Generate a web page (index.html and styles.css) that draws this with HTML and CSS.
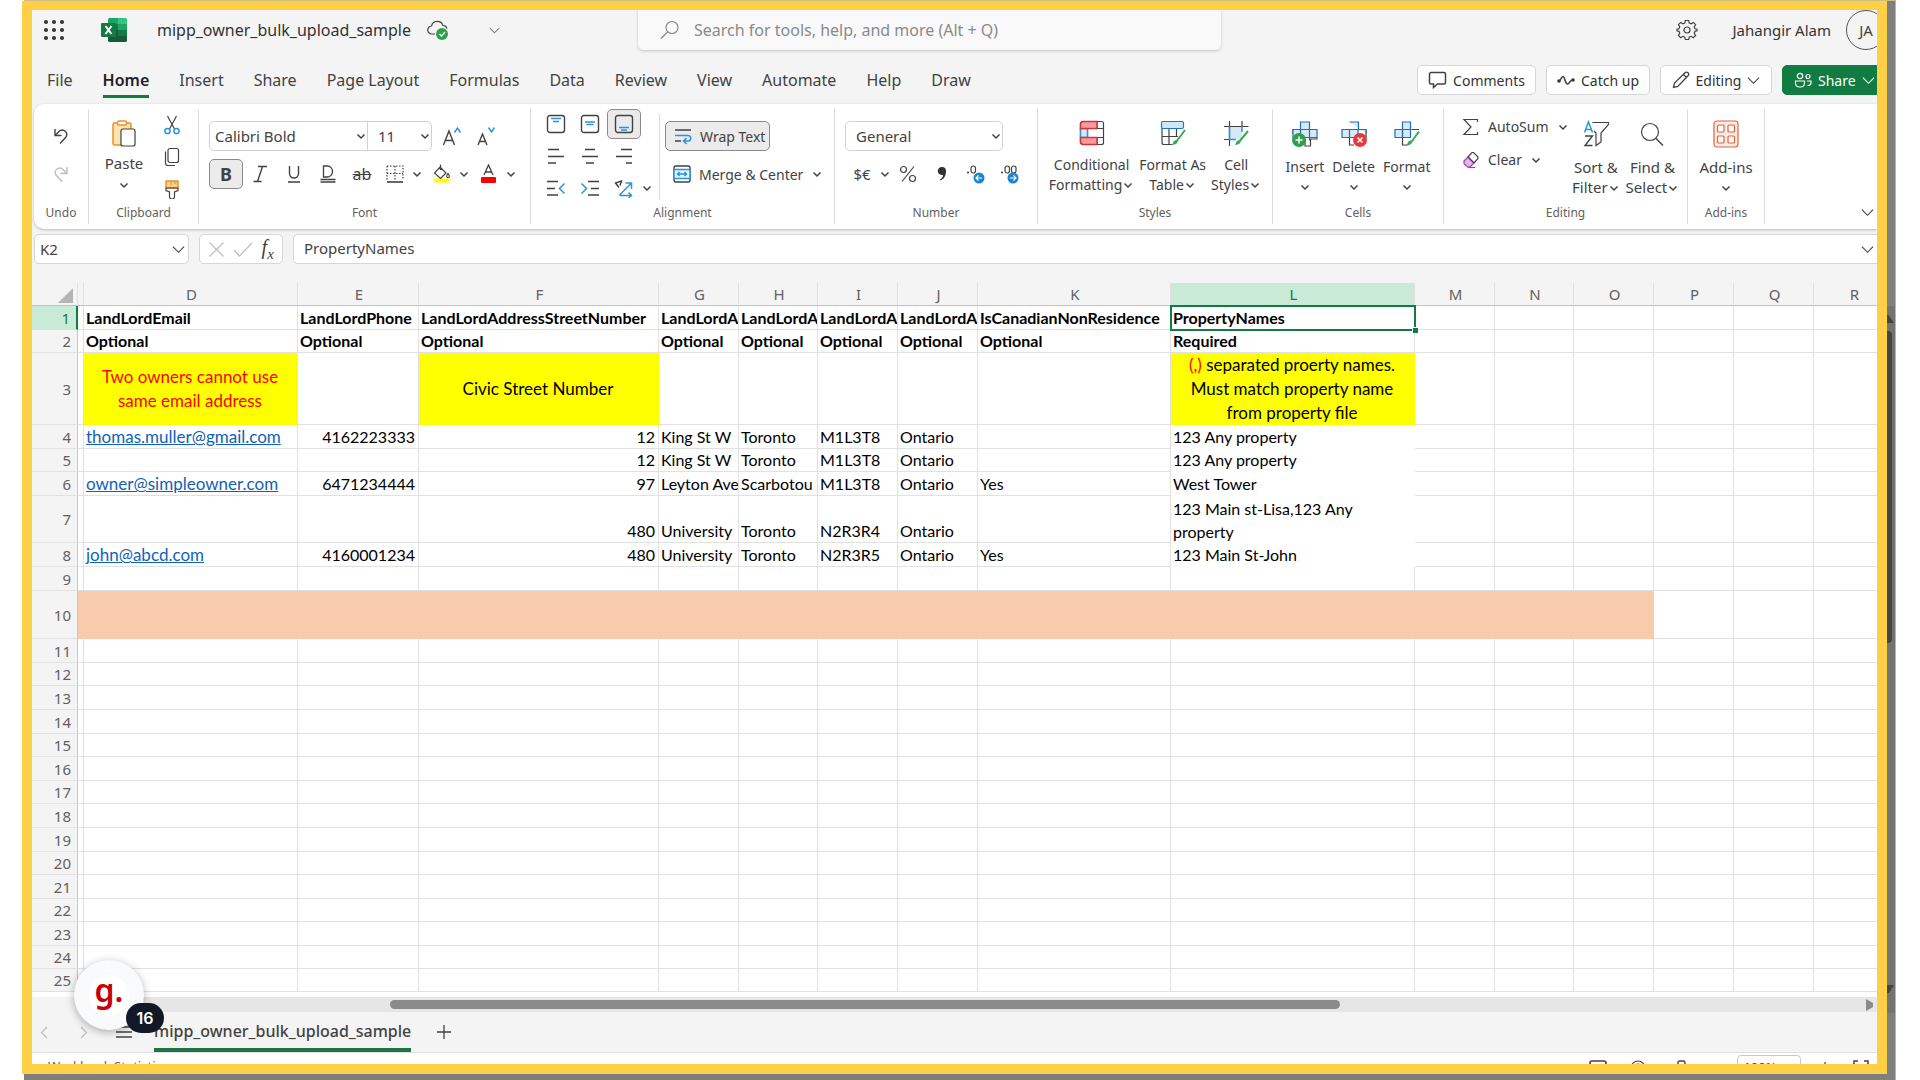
FILE: index.html
```html
<!DOCTYPE html>
<html lang="en">
<head>
  <meta charset="UTF-8" />
  <meta name="viewport" content="width=device-width, initial-scale=1.0"/>
  <title>mipp_owner_bulk_upload_sample</title>
  <link rel="stylesheet" href="styles.css">
</head>
<body>

<svg class="sprite" aria-hidden="true">
  <symbol id="chev" viewBox="0 0 12 12"><path d="M2.500 4.500 6 8l3.500-3.500" stroke-width="1.500"/></symbol>
  <symbol id="chev-lg" viewBox="0 0 14 14"><path d="M1 4l6 6 6-6"/></symbol>
</svg>

<div class="backdrop">
  <div class="app">

    <header class="topbar">
      <button class="launcher" aria-label="App launcher">
        <svg width="20" height="20" viewBox="0 0 20 20" class="solid"><circle cx="2" cy="2" r="2"/><circle cx="10" cy="2" r="2"/><circle cx="18" cy="2" r="2"/><circle cx="2" cy="10" r="2"/><circle cx="10" cy="10" r="2"/><circle cx="18" cy="10" r="2"/><circle cx="2" cy="18" r="2"/><circle cx="10" cy="18" r="2"/><circle cx="18" cy="18" r="2"/></svg>
      </button>
      <svg class="logo" width="26" height="24" viewBox="0 0 26 24">
        <path d="M8 0h9v6H7V1z" fill="#21a366"/><path d="M17 0h8l1 1v5h-9z" fill="#33c481"/>
        <path d="M7 6h10v6H7z" fill="#107c41"/><path d="M17 6h9v6h-9z" fill="#21a366"/>
        <path d="M7 12h10v12H8l-1-1z" fill="#185c37"/><path d="M17 12h9v6h-9z" fill="#107c41"/><path d="M17 18h9v5l-1 1h-8z" fill="#185c37"/>
        <rect y="5" width="15" height="14" rx="1" fill="#107c41"/>
        <path d="M4.500 8l6 8M10.500 8l-6 8" stroke="#fff" stroke-width="2"/>
      </svg>
      <span class="file-name">mipp_owner_bulk_upload_sample</span>
      <svg class="cloud" width="22" height="22" viewBox="0 0 22 22">
        <path d="M8 15H5a4 4 0 0 1-.5-8A6 6 0 0 1 16 6.500a4 4 0 0 1 4 3"/>
        <circle cx="15" cy="15" r="6" fill="#2fa14e" stroke="none"/><path d="M12.500 15l2 2 3.500-4" stroke="#fff"/>
      </svg>
      <button class="icon-btn" aria-label="File menu"><svg width="11" height="11"><use href="#chev-lg"/></svg></button>
      <label class="search">
        <svg width="20" height="20" viewBox="0 0 20 20"><circle cx="12" cy="7.500" r="6"/><path d="M7.500 12 1 18.500"/></svg>
        <input type="search" aria-label="Search" placeholder="Search for tools, help, and more (Alt + Q)">
      </label>
      <div class="account">
        <button class="icon-btn" aria-label="Settings">
          <svg width="22" height="22" viewBox="0 0 22 22"><path d="M9.300 1.500h3.400l.5 2.500 1.900.8 2.200-1.400 2.300 2.300-1.400 2.200.8 1.900 2 .4v1.600l-2 .5-.8 1.900 1.400 2.200-2.300 2.300-2.200-1.400-1.900.8-.5 2.400H9.300l-.5-2.400-1.900-.8-2.200 1.400-2.300-2.300 1.400-2.200-.8-1.900-2-.5v-1.600l2-.4.8-1.900-1.400-2.200 2.300-2.300 2.200 1.400 1.900-.8z"/><circle cx="11" cy="11" r="3"/></svg>
        </button>
        <span class="user">Jahangir Alam</span>
        <button class="avatar" aria-label="Account">JA</button>
      </div>
    </header>

    <nav class="tabs">
      <a href="#">File</a>
      <a href="#" class="active">Home</a>
      <a href="#">Insert</a>
      <a href="#">Share</a>
      <a href="#">Page Layout</a>
      <a href="#">Formulas</a>
      <a href="#">Data</a>
      <a href="#">Review</a>
      <a href="#">View</a>
      <a href="#">Automate</a>
      <a href="#">Help</a>
      <a href="#">Draw</a>
      <div class="tab-actions">
        <button class="comments"><svg width="19" height="18" viewBox="0 0 19 18"><path d="M3 1.500h13A1.500 1.500 0 0 1 17.500 3v8.500A1.500 1.500 0 0 1 16 13H9.500L5.500 16.500V13H3a1.500 1.500 0 0 1-1.500-1.500V3A1.500 1.500 0 0 1 3 1.500z" stroke-width="1.500"/></svg>Comments</button>
        <button class="catch-up"><svg width="18" height="14" viewBox="0 0 18 14"><circle cx="2" cy="8" r="1.800" class="solid"/><circle cx="16" cy="7" r="1.800" class="solid"/><path d="M2 8c2 0 2-4.500 4-4.500s2 7.500 4.500 7.500S12 7 16 7" stroke-width="1.600"/></svg>Catch up</button>
        <button class="editing-mode"><svg width="18" height="18" viewBox="0 0 18 18"><path d="M1.500 16.500l1-4.500L13 1.800a2 2 0 0 1 3 3L5.800 15.500zM11.500 3.500l3 3" stroke-width="1.300"/></svg>Editing<svg width="13" height="13"><use href="#chev-lg"/></svg></button>
        <button class="share"><svg width="18" height="16" viewBox="0 0 18 16"><circle cx="6" cy="4" r="2.700"/><circle cx="14" cy="4.500" r="2"/><path d="M1.500 9h9v2.500a4 4 0 0 1-4 3.500H5.500a4 4 0 0 1-4-3.500zM13 9h4v2c0 1.500-1.500 2.500-3.500 2.500"/></svg>Share<svg width="13" height="13"><use href="#chev-lg"/></svg></button>
      </div>
    </nav>

    <section class="ribbon">
      <div class="group g-undo">
        <div class="body">
          <button class="tool" aria-label="Undo"><svg width="18" height="18" viewBox="0 0 18 18"><path d="M3 2v6.500h6.500M3 8.500 7.500 4a4.500 4.500 0 0 1 6.500 6l-6 6.500" stroke-width="1.400"/></svg></button>
          <button class="tool muted" aria-label="Redo"><svg width="18" height="18" viewBox="0 0 18 18"><path d="M15 2v6.500H8.500M15 8.500 10.500 4a4.500 4.500 0 0 0-6.500 6l6 6.500" stroke-width="1.400"/></svg></button>
        </div>
        <h2>Undo</h2>
      </div>

      <div class="group g-clipboard">
        <div class="body">
          <button class="big paste">
            <svg width="24" height="27" viewBox="0 0 24 27"><rect x="1" y="3" width="18" height="22" rx="1.500" fill="#fce3b0" stroke="#e8912d" stroke-width="1.500"/><rect x="5.500" y="1" width="9" height="4" rx="1.500" fill="#fff" stroke="#e8912d" stroke-width="1.500"/><rect x="9" y="9" width="14" height="17" rx="2" fill="#fff"/></svg>
            Paste
            <svg width="12" height="12"><use href="#chev"/></svg>
          </button>
          <div class="stack">
            <button class="tool" aria-label="Cut"><svg width="18" height="20" viewBox="0 0 18 20"><path d="M4.500 1l7 13M13.500 1l-7 13"/><circle cx="4.500" cy="16" r="2.600" class="blue"/><circle cx="13.500" cy="16" r="2.600" class="blue"/></svg></button>
            <button class="tool" aria-label="Copy"><svg width="18" height="20" viewBox="0 0 18 20"><rect x="5" y="1.500" width="10.500" height="14" rx="2"/><path d="M2.500 4.500V16a2.500 2.500 0 0 0 2.500 2.500h7"/></svg></button>
            <button class="tool" aria-label="Format painter"><svg width="18" height="20" viewBox="0 0 18 20"><path d="M3 2h12v7H3z" fill="#fcd28a" stroke="#e8912d" stroke-width="1.500"/><path d="M8 2v4M12 2v3" stroke="#e8912d"/><path d="M3 9h12v2.500l-3.500 1.500v4.500a2.500 2.500 0 0 1-5 0V13L3 11.500z"/></svg></button>
          </div>
        </div>
        <h2>Clipboard</h2>
      </div>

      <div class="group g-font">
        <div class="body rows">
          <div class="row">
            <div class="combo">
              <div class="pick pick-font"><select aria-label="Font"><option>Calibri Bold</option></select><svg width="12" height="12"><use href="#chev"/></svg></div>
              <div class="pick pick-size"><select aria-label="Font size"><option>11</option></select><svg width="12" height="12"><use href="#chev"/></svg></div>
            </div>
            <button class="tool" aria-label="Grow font"><svg width="20" height="20" viewBox="0 0 20 20"><path d="M1.500 19 7 5l5.500 14M3.300 14.500h7.400" stroke-width="1.400"/><path d="M12.500 6.500 15.500 2l3 4.500" class="blue"/></svg></button>
            <button class="tool" aria-label="Shrink font"><svg width="20" height="20" viewBox="0 0 20 20"><path d="M2 19l4.500-11L11 19M3.500 15.500h6" stroke-width="1.400"/><path d="M12.500 1.500l3 4.500 3-4.500" class="blue"/></svg></button>
          </div>
          <div class="row">
            <button class="tool on" aria-label="Bold"><b class="glyph">B</b></button>
            <button class="tool" aria-label="Italic"><svg width="16" height="18" viewBox="0 0 16 18"><path d="M6 1.500h9M1.500 16.500h8M10.500 1.500l-5 15" stroke-width="1.400"/></svg></button>
            <button class="tool" aria-label="Underline"><svg width="14" height="18" viewBox="0 0 14 18"><path d="M2.500 1v7.500a4.500 4.500 0 0 0 9 0V1M1 17h12" stroke-width="1.400"/></svg></button>
            <button class="tool" aria-label="Double underline"><svg width="16" height="18" viewBox="0 0 16 18"><path d="M3.500 1h4a5 5.500 0 0 1 0 11h-4zM.5 14.500h15M.5 17h15" stroke-width="1.300"/></svg></button>
            <button class="tool strike" aria-label="Strikethrough"><s class="glyph">ab</s></button>
            <button class="tool w32" aria-label="Borders"><svg width="18" height="18" viewBox="0 0 18 18"><path d="M1 1h16v14M1 1v14M9 1v14M1 8.500h16" stroke-dasharray="1.500 1.500"/><path d="M1 17h16" stroke-width="1.600"/></svg></button>
            <button class="drop" aria-label="Border options"><svg width="12" height="12"><use href="#chev"/></svg></button>
            <button class="tool w32" aria-label="Fill colour"><svg width="18" height="20" viewBox="0 0 18 20"><path d="M1 14.500h15V17a1.500 1.500 0 0 1-1.500 1.500h-12A1.500 1.500 0 0 1 1 17z" fill="#ff0" stroke="none"/><path d="M7 3l6 6-5.500 5.500L1.500 9zM7.500 6V.5M15 9.500c2 2.500 1.500 4 0 4s-2-1.500 0-4z"/></svg></button>
            <button class="drop" aria-label="Fill options"><svg width="12" height="12"><use href="#chev"/></svg></button>
            <button class="tool w32" aria-label="Font colour"><svg width="18" height="20" viewBox="0 0 18 20"><path d="M4 11 8.500 1 13 11M5.500 8h6" stroke-width="1.300"/><rect x="1" y="13" width="15" height="6" rx="1" fill="#f00" stroke="none"/></svg></button>
            <button class="drop" aria-label="Font colour options"><svg width="12" height="12"><use href="#chev"/></svg></button>
          </div>
        </div>
        <h2>Font</h2>
      </div>

      <div class="group g-align">
        <div class="body">
          <div class="align-rows">
            <div class="row">
              <button class="tool" aria-label="Top align"><svg width="20" height="20" viewBox="0 0 20 20"><rect x="1.500" y="1.500" width="17" height="17" rx="2.500" stroke-width="1.400"/><path d="M5 4.500h10M7 7.500h6" class="blue"/></svg></button>
              <button class="tool" aria-label="Middle align"><svg width="20" height="20" viewBox="0 0 20 20"><rect x="1.500" y="1.500" width="17" height="17" rx="2.500" stroke-width="1.400"/><path d="M5 8h10M6.500 10.500h7" class="blue"/></svg></button>
              <button class="tool on" aria-label="Bottom align"><svg width="20" height="20" viewBox="0 0 20 20"><rect x="1.500" y="1.500" width="17" height="17" rx="2.500" stroke-width="1.400"/><path d="M5 13.500h10M7 16h6" class="blue"/></svg></button>
            </div>
            <div class="row">
              <button class="tool" aria-label="Align left"><svg width="20" height="20" viewBox="0 0 20 20"><path d="M2 3.500h11M2 10.500h16M2 17h8" stroke-width="1.500"/></svg></button>
              <button class="tool" aria-label="Centre"><svg width="20" height="20" viewBox="0 0 20 20"><path d="M5 3.500h10M2 10.500h16M6 17h8" stroke-width="1.500"/></svg></button>
              <button class="tool" aria-label="Align right"><svg width="20" height="20" viewBox="0 0 20 20"><path d="M7 3.500h11M2 10.500h16M12 17h6" stroke-width="1.500"/></svg></button>
            </div>
            <div class="row">
              <button class="tool" aria-label="Decrease indent"><svg width="20" height="20" viewBox="0 0 20 20"><path d="M1 3.500h11M1 10.500h8M1 17h11" stroke-width="1.500"/><path d="M18.500 5.500 13.500 10.500l5 5" class="blue"/></svg></button>
              <button class="tool" aria-label="Increase indent"><svg width="20" height="20" viewBox="0 0 20 20"><path d="M8 3.500h11M11 10.500h8M8 17h11" stroke-width="1.500"/><path d="M1.500 5.500l5 5-5 5" class="blue"/></svg></button>
              <button class="tool" aria-label="Orientation"><svg width="20" height="20" viewBox="0 0 20 20"><path d="M7.500 3 1.500 5 5 9.500M1.500 5l6-2L6 7.500" stroke-width="1.400"/><path d="M5.500 17 17 5.500M11.500 5H17.500v6M5.500 17.500h12M14.500 14.500l3 3-3 2.500" class="blue"/></svg></button>
              <button class="drop" aria-label="Orientation options"><svg width="12" height="12"><use href="#chev"/></svg></button>
            </div>
          </div>
          <div class="wraps">
            <button class="line-btn on"><svg width="18" height="18" viewBox="0 0 18 18"><path d="M1 3h16M1 14h6" stroke-width="1.500"/><path d="M1 8.500h13a2.700 2.700 0 0 1 0 5.500h-4M12.500 11l-3 3 3 3" class="blue"/></svg>Wrap Text</button>
            <button class="line-btn"><svg width="18" height="18" viewBox="0 0 18 18"><rect x="1" y="1" width="16" height="16" rx="2" stroke-width="1.400"/><rect x="1" y="4.500" width="16" height="9" fill="#e3f1fb" class="blue"/><path d="M4.500 9h9M6.500 7l-2 2 2 2M11.500 7l2 2-2 2" class="blue"/></svg>Merge &amp; Center<svg width="12" height="12"><use href="#chev"/></svg></button>
          </div>
        </div>
        <h2>Alignment</h2>
      </div>

      <div class="group g-number">
        <div class="body rows">
          <div class="row">
            <div class="combo"><div class="pick pick-number"><select aria-label="Number format"><option>General</option></select><svg width="12" height="12"><use href="#chev"/></svg></div></div>
          </div>
          <div class="row">
            <button class="tool" aria-label="Currency"><span class="glyph-sm">$€</span></button>
            <button class="drop" aria-label="Currency options"><svg width="12" height="12"><use href="#chev"/></svg></button>
            <button class="tool" aria-label="Percent"><svg width="18" height="18" viewBox="0 0 18 18"><circle cx="4.500" cy="4.500" r="3"/><circle cx="13.500" cy="13.500" r="3"/><path d="M15 1.500l-12 15"/></svg></button>
            <button class="tool" aria-label="Comma style"><svg width="12" height="16" viewBox="0 0 12 16" class="solid"><path d="M6 1a4 4 0 0 1 4 4c0 5-2 8-5.500 9.500L4 13.500C6 12.500 7 11 7 8.800A4 4 0 1 1 6 1z"/></svg></button>
            <button class="tool" aria-label="Increase decimal"><svg width="20" height="20" viewBox="0 0 20 20"><circle cx="2" cy="8.500" r="1" class="solid"/><rect x="5" y="2" width="4.500" height="7" rx="2.200"/><circle cx="13" cy="14" r="5.500" fill="#1a86d0" stroke="none"/><path d="M16 14h-6M12.500 11.500 10 14l2.500 2.500" stroke="#fff"/></svg></button>
            <button class="tool" aria-label="Decrease decimal"><svg width="20" height="20" viewBox="0 0 20 20"><circle cx="2" cy="8.500" r="1" class="solid"/><rect x="5" y="2" width="4.500" height="7" rx="2.200"/><rect x="11.500" y="2" width="4.500" height="7" rx="2.200"/><circle cx="13" cy="14" r="5.500" fill="#1a86d0" stroke="none"/><path d="M10 14h6M13.500 11.500 16 14l-2.500 2.500" stroke="#fff"/></svg></button>
          </div>
        </div>
        <h2>Number</h2>
      </div>

      <div class="group g-styles">
        <div class="body bigs">
          <button class="big">
            <svg width="26" height="26" viewBox="0 0 26 26"><rect x="1.500" y="1.500" width="23" height="23" rx="2"/><path d="M1 8.500h24M1 17.500h24M18 1v7.500M18 17.500V25M8.500 8.500v9"/><path d="M1.500 8.500h7v9h-7z" fill="#d6e9f8" class="blue"/><path d="M3.500 1.500H18v7H1.500v-5zM1.500 17.500H18v7H3.500l-2-2z" fill="#fb9ba0" stroke="#d13438" stroke-width="1.500"/></svg>
            <span>Conditional<br>Formatting<svg width="12" height="12"><use href="#chev"/></svg></span>
          </button>
          <button class="big">
            <svg width="26" height="26" viewBox="0 0 26 26"><path d="M2 8v14.500a2 2 0 0 0 2 2h8M2 16.500h16M9 8v16.500M16.500 8v9"/><rect x="1.500" y="1.500" width="22" height="7" rx="1.500" fill="#cfe6f8" stroke="#1f78c4"/><path d="M25 10l-9 12" stroke="#3fa557" stroke-width="2"/><path d="M16.500 20c2 1 1 5-4.500 5 1-1 1-5 4.500-5z" fill="#3fa557" stroke="none"/></svg>
            <span>Format As<br>Table<svg width="12" height="12"><use href="#chev"/></svg></span>
          </button>
          <button class="big">
            <svg width="26" height="26" viewBox="0 0 26 26"><path d="M6 6.500h13v13H6z" fill="#d6e9f8" stroke="none"/><path d="M6.500 1v25M19 1v6M1 6.500h24.500M1 19.500h5"/><path d="M19 6.500V12M6.500 6.500v13H13" class="blue"/><path d="M25 11l-9 11" stroke="#3fa557" stroke-width="2"/><path d="M16.500 20c2 1 1 5-4.500 5 1-1 1-5 4.500-5z" fill="#3fa557" stroke="none"/></svg>
            <span>Cell<br>Styles<svg width="12" height="12"><use href="#chev"/></svg></span>
          </button>
        </div>
        <h2>Styles</h2>
      </div>

      <div class="group g-cells">
        <div class="body bigs">
          <button class="big">
            <svg width="28" height="28" viewBox="0 0 28 28"><path d="M2 14V9.500h6M26 17.500v1.500h-6.500v7H14v-7"/><path d="M9.500 2h9v7.500H26v8H2v-8h7.500zM9.500 9.500h9v8h-9zM9.500 17.500v2M18.500 17.500v3" fill="#d6e9f8" stroke="#1f6fb2"/><circle cx="8" cy="20" r="7" fill="#2f9e4f" stroke="none"/><path d="M8 16.500v7M4.500 20h7" stroke="#fff" stroke-width="1.500"/></svg>
            <span>Insert<br><svg width="12" height="12"><use href="#chev"/></svg></span>
          </button>
          <button class="big">
            <svg width="28" height="28" viewBox="0 0 28 28"><path d="M26 9.500v8H19M14 25H9.500v-7"/><path d="M9.500 2h9v7.500H26v4M26 9.500H2v8h16v-8H9.500zM9.500 9.500v8" fill="#d6e9f8" stroke="#1f6fb2"/><circle cx="20" cy="20" r="7" fill="#e8383d" stroke="none"/><path d="M17.500 17.500l5 5M22.500 17.500l-5 5" stroke="#fff" stroke-width="1.500"/></svg>
            <span>Delete<br><svg width="12" height="12"><use href="#chev"/></svg></span>
          </button>
          <button class="big">
            <svg width="28" height="28" viewBox="0 0 28 28"><path d="M9.500 17v8h5M18.500 9.500H26"/><path d="M9.500 2h8v15.500h-8zM2 9.500h15.500v8H2z" fill="#d6e9f8" stroke="#1f6fb2"/><path d="M9.500 9.500v8" stroke="#1f6fb2"/><path d="M26 11.500l-8 11" stroke="#3fa557" stroke-width="2"/><path d="M18 20.500c2 1 1 5-4.500 5 1-1 1-5 4.500-5z" fill="#3fa557" stroke="none"/></svg>
            <span>Format<br><svg width="12" height="12"><use href="#chev"/></svg></span>
          </button>
        </div>
        <h2>Cells</h2>
      </div>

      <div class="group g-editing">
        <div class="body">
          <div class="edits">
            <button class="line-btn"><svg width="18" height="18" viewBox="0 0 18 18"><path d="M15.500 4V1.500H2L9 9l-7 7.500h13.500V14"/></svg>AutoSum<svg width="12" height="12"><use href="#chev"/></svg></button>
            <button class="line-btn"><svg width="18" height="18" viewBox="0 0 18 18"><path d="M2 10l4-4 6 6-4 4H5.500L2 12.500z" fill="#e3b3ec" stroke="#a03fb5"/><path d="M6 6l4-4.500h1.500L16 6v1.500L12 12z"/><path d="M6 16.500h7" stroke="#a03fb5"/></svg>Clear<svg width="12" height="12"><use href="#chev"/></svg></button>
          </div>
          <button class="big">
            <svg width="26" height="28" viewBox="0 0 26 28"><path d="M1.500 12.500 5.500 2l4 10.500M2.800 9.500h5.500" class="blue"/><path d="M2 16h7.500L2 25.500h7.500" stroke-width="1.400"/><path d="M9.500 2.500h16v2L18 13v9l-5 3.500V13L11 11"/></svg>
            <span>Sort &amp;<br>Filter<svg width="12" height="12"><use href="#chev"/></svg></span>
          </button>
          <button class="big">
            <svg width="26" height="28" viewBox="0 0 26 28"><circle cx="11" cy="12" r="8.500"/><path d="M17 18.500l7 7" stroke-width="1.400"/></svg>
            <span>Find &amp;<br>Select<svg width="12" height="12"><use href="#chev"/></svg></span>
          </button>
        </div>
        <h2>Editing</h2>
      </div>

      <div class="group g-addins">
        <div class="body bigs">
          <button class="big">
            <svg width="26" height="28" viewBox="0 0 26 28" class="addin"><rect x="1" y="1" width="24" height="26" rx="3" fill="#fcece6"/><rect x="4.500" y="5" width="6.500" height="7" rx="1" fill="#fff"/><rect x="15" y="5" width="6.500" height="7" rx="1" fill="#fff"/><rect x="4.500" y="16" width="6.500" height="7" rx="1" fill="#fff"/><rect x="15" y="16" width="6.500" height="7" rx="1" fill="#fff"/></svg>
            <span>Add-ins<br><svg width="12" height="12"><use href="#chev"/></svg></span>
          </button>
        </div>
        <h2>Add-ins</h2>
      </div>
      <button class="collapse" aria-label="Collapse ribbon"><svg width="13" height="13"><use href="#chev-lg"/></svg></button>
    </section>

    <section class="formula-bar">
      <div class="name-box"><input aria-label="Name box" value="K2"><button aria-label="Names"><svg width="13" height="13"><use href="#chev-lg"/></svg></button></div>
      <div class="fx">
        <button class="faint" aria-label="Cancel"><svg width="17" height="17" viewBox="0 0 17 17"><path d="M1.500 1.500l14 14M15.500 1.500l-14 14"/></svg></button>
        <button class="faint" aria-label="Enter"><svg width="20" height="17" viewBox="0 0 20 17"><path d="M1 9l5.500 6L19 2"/></svg></button>
        <button class="fx-glyph" aria-label="Insert function"><i>f<sub>x</sub></i></button>
      </div>
      <div class="formula"><input aria-label="Formula" value="PropertyNames"><button aria-label="Expand"><svg width="13" height="13"><use href="#chev-lg"/></svg></button></div>
    </section>

    <main class="sheet">
      <table>
        <colgroup id="cols"></colgroup>
        <thead><tr id="head"></tr></thead>
        <tbody id="cells"></tbody>
      </table>
    </main>

    <div class="hscroll">
      <div class="thumb"></div>
      <svg width="8" height="12" viewBox="0 0 8 12"><path d="M0 0l7 4v4l-7 4z"/></svg>
    </div>

    <footer class="sheet-tabs">
      <button class="faint" aria-label="Previous sheet"><svg width="8" height="13" viewBox="0 0 8 13"><path d="M7 1 1.500 6.500 7 12"/></svg></button>
      <button class="faint" aria-label="Next sheet"><svg width="8" height="13" viewBox="0 0 8 13"><path d="M1 1l5.500 5.500L1 12"/></svg></button>
      <button class="all-sheets" aria-label="All sheets"><svg width="16" height="12" viewBox="0 0 16 12"><path d="M0 1h16M0 6h16M0 11h16" stroke-width="1.500"/></svg></button>
      <a href="#" class="sheet-tab">mipp_owner_bulk_upload_sample</a>
      <button aria-label="New sheet"><svg width="14" height="14" viewBox="0 0 14 14"><path d="M7 0v14M0 7h14" stroke-width="1.300"/></svg></button>
    </footer>

    <div class="status">
      <span>Workbook Statistics</span>
      <div class="status-tools">
        <svg width="18" height="16" viewBox="0 0 18 16"><rect x="1" y="1" width="16" height="13" rx="2" stroke-width="1.600"/></svg>
        <svg width="18" height="18" viewBox="0 0 18 18"><circle cx="9" cy="8" r="7"/><circle cx="9" cy="8" r="4"/></svg>
        <svg width="18" height="18" viewBox="0 0 18 18"><rect x="9" y="1" width="7" height="9" rx="1.500" stroke-width="1.400"/><path d="M1 6h5M6 4v5"/></svg>
        <button class="zoom">100%<svg width="12" height="12"><use href="#chev"/></svg></button>
        <svg width="12" height="16" viewBox="0 0 12 16"><path d="M6 2v12M0 8h12"/></svg>
        <svg width="16" height="16" viewBox="0 0 16 16"><path d="M1 5V1h4M11 1h4v4M1 11v4h4M15 11v4h-4" stroke-width="1.500"/></svg>
      </div>
    </div>

    <button class="helper" aria-label="Helper"><span class="disc">g.</span><span class="count">16</span></button>
  </div>

  <div class="vscroll">
    <svg width="7" height="8" viewBox="0 0 7 8"><path d="M0 0h1.500L7 8H0z"/></svg>
    <div class="thumb"></div>
    <svg width="7" height="8" viewBox="0 0 7 8"><path d="M0 0h7L2 8H0z"/></svg>
  </div>
</div>

<script src="script.js"></script>
</body>
</html>
```
FILE: styles.css
```css
* {
  box-sizing: border-box;
  margin: 0;
  padding: 0;
}
body {
  font-family: "Noto Sans", "Open Sans", sans-serif;
  font-size: 15px;
  color: #424242;
  background-color: #fff;
}
button, input, select {
  font: inherit;
  color: inherit;
  border: none;
  background: none;
  outline: none;
}
button {
  display: flex;
  align-items: center;
  justify-content: center;
  white-space: nowrap;
}
a {
  color: inherit;
  text-decoration: none;
}
svg {
  flex: none;
  fill: none;
  stroke: #424242;
  stroke-width: 1.2;
}
.sprite {
  display: none;
}
svg.solid, svg .solid {
  fill: #333;
  stroke: none;
}
svg .blue {
  stroke: #2b95d9;
  stroke-width: 1.5;
}

/* frame */
.backdrop {
  display: flex;
  height: 100vh;
  margin: 0 24px;
  padding-bottom: 6px;
  background-color: #7f7f7f;
  border-top: 1px solid #cdbd86;
  border-right: 1px solid #b5b5b5;
}
.app {
  position: relative;
  flex: 1;
  min-width: 0;
  margin-left: -2px;
  border: 10px solid #ffd045;
  border-top-width: 9px;
  background-color: #f4f4f4;
  display: flex;
  flex-direction: column;
  overflow: hidden;
}
.vscroll {
  width: 8px;
  margin: 305px 0 61px;
  padding: 9px 0 20px;
  background-color: #737373;
  display: flex;
  flex-direction: column;
  gap: 8px;
}
.vscroll svg {
  fill: #444;
  stroke: none;
}
.vscroll .thumb {
  flex: 0 0 46%;
  width: 5px;
  margin-bottom: auto;
  border-radius: 0 4px 4px 0;
  background-color: #444;
}

/* title bar */
.topbar {
  display: flex;
  align-items: center;
  height: 40px;
  padding-left: 12px;
}
.logo {
  margin: 0 30px 0 37px;
  stroke: none;
}
.file-name {
  width: 257px;
  font-size: 16px;
  color: #333;
  white-space: nowrap;
}
.cloud {
  margin: 0 40px 0 13px;
}
.search {
  display: flex;
  align-items: center;
  gap: 14px;
  width: 583px;
  height: 40px;
  margin-left: 138px;
  padding-left: 22px;
  background-color: #f9f9f9;
  border-radius: 0 0 5px 5px;
  box-shadow: 0 1px 3px rgba(0,0,0,0.2);
}
.search svg {
  stroke: #8a8a8a;
}
.search input {
  flex: 1;
  font-size: 16px;
}
.search input::placeholder {
  color: #8a8a8a;
}
.account {
  display: flex;
  align-items: center;
  margin-left: auto;
  margin-right: -9px;
}
.user {
  margin: 0 15px 0 34px;
  color: #333;
}
.avatar {
  width: 40px;
  height: 40px;
  border: 1px solid #555;
  border-radius: 50%;
}

/* menu tabs */
.tabs {
  display: flex;
  align-items: center;
  gap: 30px;
  height: 54px;
  padding: 6px 0 0 15px;
  font-size: 16px;
  white-space: nowrap;
}
.tabs a {
  height: 35px;
  line-height: 34px;
  border-bottom: 3px solid transparent;
}
.tabs a.active {
  font-weight: 600;
  color: #222;
  border-color: #107c41;
}
.tab-actions {
  display: flex;
  gap: 10px;
  margin-left: auto;
  font-size: 14px;
}
.tab-actions button {
  height: 30px;
  gap: 6px;
  background-color: #fff;
  border: 1px solid #d6d6d6;
  border-radius: 5px;
  color: #333;
}
.comments { width: 119px; }
.catch-up { width: 104px; }
.editing-mode { width: 112px; }
.tab-actions .share {
  width: 95px;
  justify-content: flex-start;
  padding-left: 11px;
  color: #fff;
  background-color: #107c41;
  border-color: #107c41;
  border-radius: 5px 0 0 5px;
}
.share svg {
  stroke: #fff;
}

/* ribbon */
.ribbon {
  display: flex;
  height: 125px;
  margin-left: 2px;
  padding: 5px 0;
  background-color: #fff;
  border-radius: 10px 0 0 10px;
  box-shadow: 0 1px 3px rgba(0,0,0,0.25);
}
.group {
  display: flex;
  flex-direction: column;
  border-right: 1px solid #dcdcdc;
}
.group h2 {
  margin-top: auto;
  line-height: 22px;
  font-size: 12px;
  font-weight: normal;
  text-align: center;
  color: #616161;
}
.g-undo { width: 55px; }
.g-clipboard { width: 110px; }
.g-font { width: 332px; }
.g-align { width: 304px; }
.g-number { width: 203px; }
.g-styles { width: 235px; }
.g-cells { width: 171px; }
.g-editing { width: 244px; }
.g-addins { width: 77px; }
.body {
  display: flex;
  height: 93px;
}
.g-undo .body {
  flex-direction: column;
  align-items: center;
  gap: 8px;
  padding-top: 12px;
}
.tool {
  width: 34px;
  height: 30px;
}
.on {
  background-color: #ebebeb;
  border: 1px solid #8a8a8a;
  border-radius: 5px;
}
.muted svg, .faint svg {
  stroke: #bdbdbd;
}
.w32 {
  width: 32px;
}
.drop {
  width: 12px;
  margin-right: 3px;
}
.big {
  flex-direction: column;
  justify-content: flex-start;
  padding-top: 11px;
  line-height: 20px;
  gap: 9px;
}
.big span svg {
  vertical-align: -1px;
}
.g-clipboard .body {
  gap: 14px;
  padding-left: 12px;
}
.paste {
  width: 46px;
  gap: 6px;
}
.stack {
  display: grid;
  align-content: start;
  grid-auto-rows: 32px;
  align-items: center;
  width: 22px;
}
.stack .tool {
  width: 22px;
}
.rows {
  flex-direction: column;
  gap: 8px;
  padding: 12px 0 0 10px;
}
.row {
  display: flex;
  align-items: center;
}
.combo {
  display: flex;
  margin-right: 3px;
  border: 1px solid #d1d1d1;
  border-radius: 5px;
}
.pick {
  display: grid;
  align-items: center;
  height: 28px;
}
.pick select, .pick svg {
  grid-area: 1 / 1;
}
.pick select {
  appearance: none;
  width: 100%;
  padding-left: 5px;
}
.pick svg {
  justify-self: end;
  pointer-events: none;
}
.pick-font {
  width: 158px;
  border-right: 1px solid #d1d1d1;
}
.pick-size {
  width: 63px;
}
.pick-size select, .pick-number select {
  padding-left: 10px;
}
.pick-number {
  width: 156px;
}
.glyph {
  font-size: 18px;
}
.strike .glyph {
  font-size: 16px;
}
.glyph-sm {
  font-size: 15px;
}
.g-align .body {
  padding-left: 8px;
}
.align-rows {
  display: flex;
  flex-direction: column;
  gap: 2px;
  width: 120px;
}
.wraps {
  display: flex;
  flex-direction: column;
  align-items: flex-start;
  gap: 8px;
  height: 86px;
  margin-top: 5px;
  padding: 7px 0 0 5px;
  border-left: 1px solid #dcdcdc;
}
.line-btn {
  height: 30px;
  padding: 0 4px 0 8px;
  gap: 8px;
  font-size: 14px;
}
.g-number .drop {
  margin: 0;
}
.g-styles .bigs {
  justify-content: center;
  gap: 5px;
  font-size: 14px;
}
.g-cells .bigs {
  justify-content: center;
  gap: 8px;
  font-size: 14px;
}
.g-addins .bigs {
  justify-content: center;
}
.addin, .addin rect {
  stroke: #e0633d;
}
.g-editing .body {
  gap: 6px;
  padding-left: 10px;
}
.edits {
  width: 112px;
  padding-top: 1px;
}
.edits .line-btn {
  height: 33px;
}
.collapse {
  align-self: flex-end;
  height: 24px;
  margin: 0 3px 0 auto;
}

/* formula bar */
.formula-bar {
  display: flex;
  height: 54px;
  padding: 5px 0 19px 2px;
}
.formula-bar > div {
  display: flex;
  align-items: center;
  background-color: #fff;
  border: 1px solid #d6d6d6;
  border-radius: 5px;
}
.name-box {
  width: 155px;
  margin-right: 10px;
}
.name-box input {
  width: 100%;
  padding-left: 5px;
}
.name-box button, .formula button {
  padding-right: 3px;
}
.fx {
  width: 84px;
  margin-right: 10px;
  justify-content: space-evenly;
}
.fx-glyph {
  font-family: "Liberation Serif", serif;
  font-size: 20px;
}
.fx-glyph sub {
  font-size: 15px;
}
.formula-bar .formula {
  flex: 1;
  border-right: none;
  border-radius: 5px 0 0 5px;
}
.formula input {
  flex: 1;
  padding: 0 0 3px 10px;
}

/* grid */
.sheet {
  flex: 1;
  min-height: 0;
  overflow: hidden;
  background-color: #fff;
}
.sheet table {
  table-layout: fixed;
  width: 0;
  border-collapse: separate;
  border-spacing: 0;
}
.sheet th {
  font-weight: normal;
  color: #616161;
  background-color: #f4f4f4;
}
.sheet thead th {
  height: 23px;
  padding-left: 2px;
  line-height: 20px;
  border-right: 1px solid #e1e1e1;
  border-bottom: 1px solid #c0c0c0;
}
.sheet thead th.picked {
  color: #107c41;
  background-color: #caead8;
}
.corner svg {
  display: block;
  margin: 2px 4px 0 auto;
  fill: #b5b5b5;
  stroke: none;
}
.sheet tbody th {
  padding-right: 6px;
  line-height: 22px;
  text-align: right;
  border-right: 1px solid #c8c8c8;
  border-bottom: 1px solid #e1e1e1;
}
.sheet tbody th.picked {
  color: #107c41;
  background-color: #caead8;
  border-right: 2px solid #107c41;
}
.sheet td {
  height: 23px;
  padding: 0 3px 0 2px;
  font-family: Lato, sans-serif;
  font-size: 16px;
  line-height: 22px;
  color: #000;
  vertical-align: bottom;
  white-space: nowrap;
  overflow: hidden;
  border-right: 1px solid #e1e1e1;
  border-bottom: 1px solid #e1e1e1;
}
.sheet .tall td, .sheet .tall th {
  height: 24px;
}
.sheet .row-3 td {
  height: 72px;
}
.sheet .row-7 td {
  height: 47px;
}
.sheet .row-10 td {
  height: 48px;
}
.sheet td.bold {
  font-weight: bold;
}
.sheet td.num {
  text-align: right;
}
.sheet td.note {
  background-color: #ff0;
  border-color: #ff0;
  border-bottom: none;
  font-size: 17px;
  line-height: 24px;
  text-align: center;
  vertical-align: middle;
  white-space: normal;
}
.sheet td.peach {
  background-color: #f8cbad;
  border-color: #f8cbad;
}
.sheet td.plain {
  border-color: #fff;
}
.sheet td.wrap {
  border-bottom: none;
  line-height: 23px;
  white-space: normal;
}
.sheet td a {
  font-size: 17px;
  color: #0f62b8;
  text-decoration: underline;
}
.red {
  color: #f00;
}
.sheet td.selected {
  position: relative;
  overflow: visible;
  outline: 2px solid #107c41;
  outline-offset: -1px;
}
.handle {
  position: absolute;
  right: -4px;
  bottom: -4px;
  width: 6px;
  height: 6px;
  background-color: #107c41;
  border: solid #fff;
  border-width: 1px 0 0 1px;
}

/* bottom bars */
.hscroll {
  display: flex;
  align-items: center;
  justify-content: space-between;
  height: 15px;
  margin-left: 46px;
  padding: 0 3px 0 312px;
  background-color: #e6e6e6;
}
.hscroll .thumb {
  width: 64%;
  height: 9px;
  border-radius: 5px;
  background-color: #8a8a8a;
}
.hscroll svg {
  fill: #8a8a8a;
  stroke: none;
}
.sheet-tabs {
  display: flex;
  align-items: center;
  height: 41px;
  padding-left: 8px;
  border-bottom: 1px solid #e1e1e1;
}
.sheet-tabs .faint {
  margin-right: 32px;
}
.sheet-tabs .faint + .all-sheets {
  margin: 0 22px 0 -4px;
}
.sheet-tab {
  height: 39px;
  margin-right: 26px;
  line-height: 37px;
  font-size: 16px;
  font-weight: 500;
  border-bottom: 4px solid #217346;
}
.status {
  display: flex;
  justify-content: space-between;
  align-items: flex-start;
  height: 11px;
  padding: 2px 8px 0 16px;
  background-color: #fff;
  overflow: hidden;
  font-size: 13px;
}
.status span {
  padding-top: 2px;
  color: #616161;
}
.status-tools {
  display: flex;
  align-items: flex-start;
  gap: 22px;
}
.status-tools > svg {
  margin-top: 5px;
}
.zoom {
  width: 64px;
  height: 24px;
  margin: 0 -4px 0 28px;
  gap: 6px;
  border: 1px solid #c8c8c8;
  border-radius: 4px;
}
.helper {
  position: absolute;
  left: 42px;
  bottom: 34px;
  width: 70px;
  height: 70px;
  border-radius: 50%;
  background-color: #f9fafb;
  box-shadow: 0 2px 8px rgba(0,0,0,0.3);
}
.disc {
  width: 40px;
  height: 40px;
  border-radius: 50%;
  background-color: #fff;
  font-size: 32px;
  font-weight: 600;
  line-height: 30px;
  color: #c8000a;
}
.count {
  position: absolute;
  right: -20px;
  bottom: -3px;
  width: 38px;
  height: 30px;
  border-radius: 15px;
  background-color: #111827;
  font-family: Inter, sans-serif;
  font-size: 16px;
  font-weight: 600;
  line-height: 30px;
  color: #fff;
}
```
FILE: script.js
```js
const columns = [
  ['', 6], ['D', 214], ['E', 121], ['F', 240], ['G', 80], ['H', 79], ['I', 80], ['J', 80],
  ['K', 193], ['L', 244], ['M', 80], ['N', 79], ['O', 80], ['P', 80], ['Q', 80], ['R', 80]
];

const rows = {
  1: { D: 'LandLordEmail', E: 'LandLordPhone', F: 'LandLordAddressStreetNumber', G: 'LandLordA', H: 'LandLordA', I: 'LandLordA', J: 'LandLordA', K: 'IsCanadianNonResidence', L: 'PropertyNames<span class="handle"></span>' },
  2: { D: 'Optional', E: 'Optional', F: 'Optional', G: 'Optional', H: 'Optional', I: 'Optional', J: 'Optional', K: 'Optional', L: 'Required' },
  3: { D: '<span class="red">Two owners cannot use<br>same email address</span>', F: 'Civic Street Number', L: '<span class="red">(,)</span> separated proerty names.<br>Must match property name<br>from property file' },
  4: { D: '<a href="#">thomas.muller@gmail.com</a>', E: '4162223333', F: '12', G: 'King St W', H: 'Toronto', I: 'M1L3T8', J: 'Ontario', L: '123 Any property' },
  5: { F: '12', G: 'King St W', H: 'Toronto', I: 'M1L3T8', J: 'Ontario', L: '123 Any property' },
  6: { D: '<a href="#">owner@simpleowner.com</a>', E: '6471234444', F: '97', G: 'Leyton Ave', H: 'Scarbotou', I: 'M1L3T8', J: 'Ontario', K: 'Yes', L: 'West Tower' },
  7: { F: '480', G: 'University', H: 'Toronto', I: 'N2R3R4', J: 'Ontario', L: '123 Main st-Lisa,123 Any<br>property' },
  8: { D: '<a href="#">john@abcd.com</a>', E: '4160001234', F: '480', G: 'University', H: 'Toronto', I: 'N2R3R5', J: 'Ontario', K: 'Yes', L: '123 Main St-John' }
};

const tallRows = [1, 4, 6, 8, 9, 11, 13, 14, 16, 18, 19, 21, 23];

function cellClass(row, col) {
  const names = [];
  if (row <= 2) names.push('bold');
  if (row === 3 && ['D', 'F', 'L'].includes(col)) names.push('note');
  if (row >= 4 && row <= 8 && (col === 'E' || col === 'F')) names.push('num');
  if (row === 10 && !['P', 'Q', 'R'].includes(col)) names.push('peach');
  if (col === 'L' && row >= 4 && row <= 8) names.push(row === 7 ? 'plain wrap' : 'plain');
  if (col === 'L' && row === 1) names.push('selected');
  return names.join(' ');
}

document.getElementById('cols').innerHTML =
  '<col style="width:46px">' + columns.map(c => `<col style="width:${c[1]}px">`).join('');

document.getElementById('head').innerHTML =
  '<th class="corner"><svg width="15" height="15"><path d="M15 0v15H0z"/></svg></th>' +
  columns.map(c => `<th class="${c[0] === 'L' ? 'picked' : ''}">${c[0]}</th>`).join('');

let html = '';
for (let r = 1; r <= 25; r++) {
  const data = rows[r] || {};
  html += `<tr class="row-${r}${tallRows.includes(r) ? ' tall' : ''}">`;
  html += `<th class="${r === 1 ? 'picked' : ''}">${r}</th>`;
  columns.forEach(c => {
    html += `<td class="${cellClass(r, c[0])}">${data[c[0]] || ''}</td>`;
  });
  html += '</tr>';
}
document.getElementById('cells').innerHTML = html;
```
